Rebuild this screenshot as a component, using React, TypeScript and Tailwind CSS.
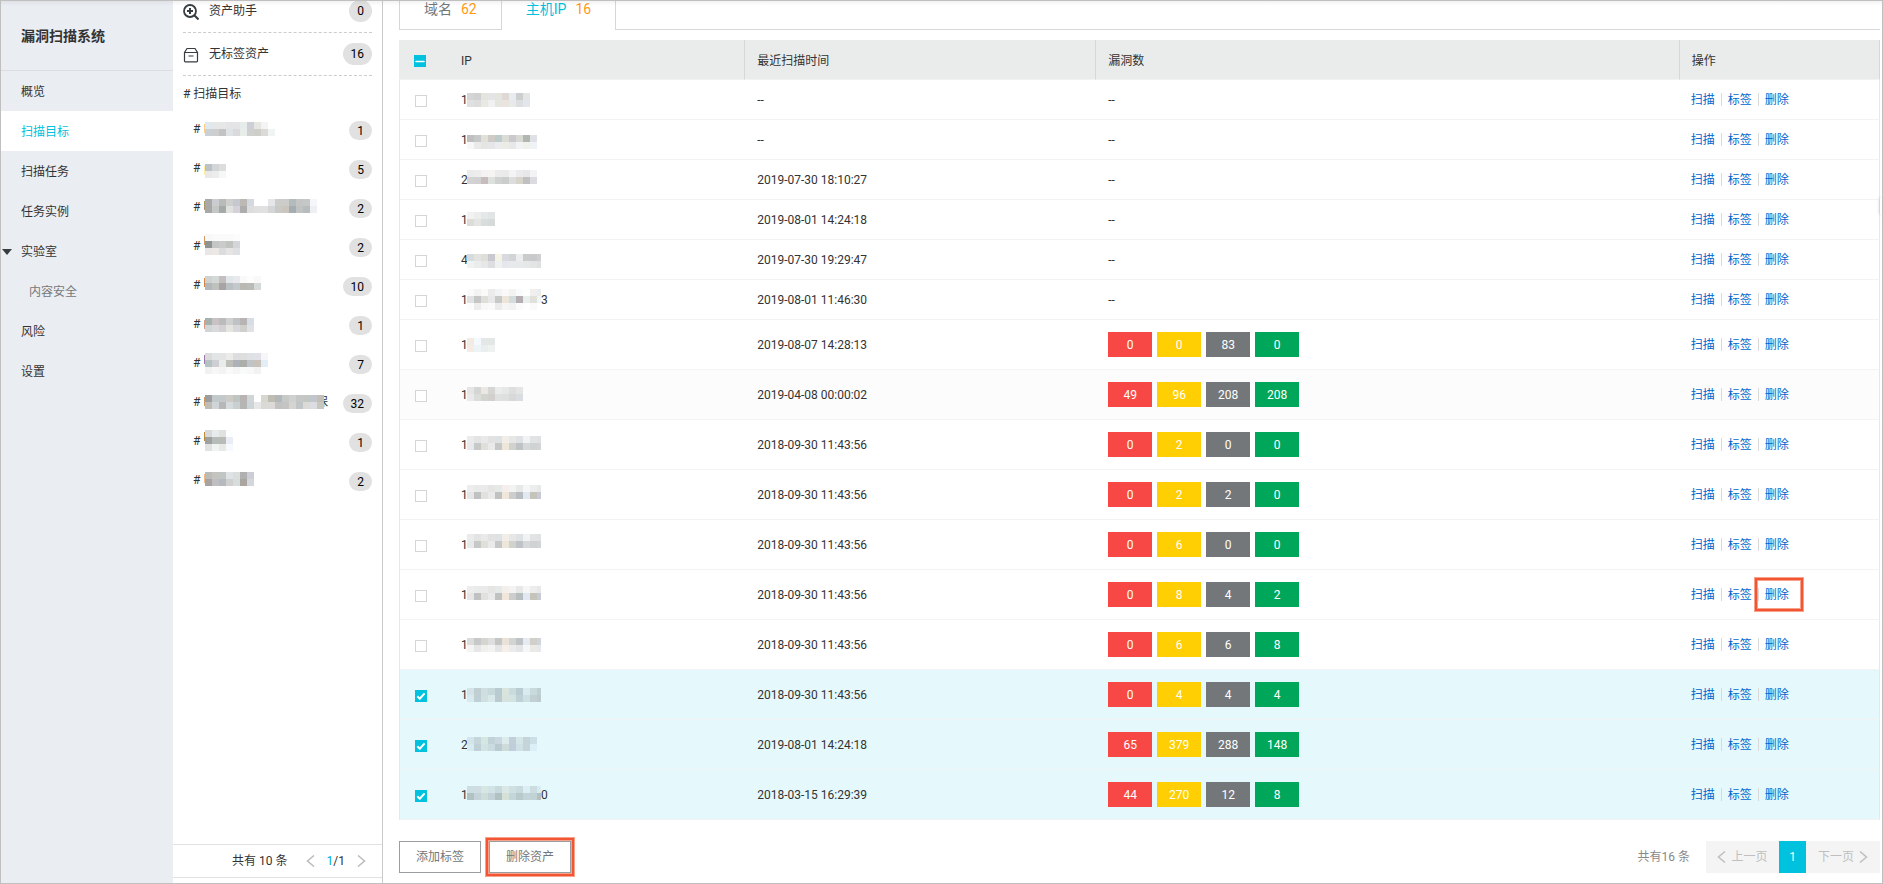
import { Fragment, useEffect, useRef } from "react";

type Grid = string[];

const CELL = 7;
const HOST_MASK = 74;

/* Pixelated mask; each row lists its cells as three- or six-digit hex colours, "-" is an empty cell. */
function Mosaic({ top, rows, height, sliver, max = 999 }: { top: number; rows: Grid; height: number; sliver?: string; max?: number }) {
  const grid = rows.map((r) => r.split(" "));
  const cols = Math.max(...grid.map((r) => r.length));
  return (
    <svg aria-hidden="true" width={Math.min(cols * CELL, max) + 1} height={height} shapeRendering="crispEdges" className="relative block shrink-0">
      {sliver && <rect x={0} y={top + 2} width={1} height={9} fill={sliver} />}
      {grid.map((row, y) =>
        row.map((c, x) =>
          c === "-" ? null : (
            <rect key={`${x}-${y}`} x={x * CELL + 1} y={top + y * CELL} width={CELL} height={CELL} fill={`#${c}`} />
          ),
        ),
      )}
    </svg>
  );
}

const nav = [
  { label: "概览" },
  { label: "扫描目标", active: true },
  { label: "扫描任务" },
  { label: "任务实例" },
  { label: "实验室", open: true },
  { label: "内容安全", child: true },
  { label: "风险" },
  { label: "设置" },
];

const tags: { count: number; top: number; rows: Grid; tail?: string; sliver: string }[] = [
  { count: 1, top: 11, sliver: "#fc8", rows: ["e1e9f0 e6e7e7 e6e7e7 e4e4e4 e3e4e5 e6ece9 cdced6 e6e6e2 f3f4f6", "c9d0d6 cdcecf c3c3c3 dfe3e7 dad9dc e7ede8 d0d0d0 cfcfca dbdad8 f0f4f2"] },
  { count: 5, top: 14, sliver: "#fe9", rows: ["bcc1c8 d2d6d6 dcdddc", "e9e9e9 ebecec f6f7f7"] },
  { count: 2, top: 10, sliver: "#a96", rows: ["a9a9a9 cacccf b9bbbb cfd0cd c5c8d0 bcb8b4 d3d9df - - e6e6e8 ccccc9 cccdca b4bbbd c4c6c5 c5c8c6 f5f6fb", "a8a8a8 c3c8c4 a5a9a8 dfe2df d5d1d8 adadae dcdddf e0e0e0 e1e1e1 d3d5d6 c9cac7 cac5bd a5adb1 bfc3c4 b6bdbc eeeff2"] },
  { count: 2, top: 6, sliver: "#c96", rows: ["f8f8f7 fafaf9 fafafa fafafa fcfcfc", "8e9492 c4c6c5 c9cac9 c1c3c1 d3d5d9", "eae6e4 ebe8e6 dcdcdf e7e5e4 dfe0e3"] },
  { count: 10, top: 9, sliver: "#c84", rows: ["d0d2d2 d4d8d6 c3bfbf e1e6e8 e7e9ec f9f9f9 fdfdfd f9f9f8", "b3b8ba bfc2bc a8a4a4 bbc0c5 c3c8cb b9b8b3 babab7 d5dad9"] },
  { count: 1, top: 12, sliver: "#d98", rows: ["a5b1ab c8c2c7 bbbbbb cfd0cf bfc2c5 b7b4b3 d7dde5", "d0d5d7 dad9dc d4d1d5 e4e5e1 d8d8da cfcfcb dfe1e7"] },
  { count: 7, top: 8, sliver: "#97a", rows: ["dadcdb e2e5e5 e4e4e5 ebecea dddde0 dddedd dfe2e4 e1e2e7 f5f6fa", "b4c2c1 cecfd4 eaecea bfbfb9 aeb1b8 aaafaa bfc4c9 c9c2b9 e2edf7", "f0f2f1 f7f7f6 f4f3f4 f8f9f9 f5f5f6 f9fafa f8f8f8 f3f2f2"] },
  { count: 32, top: 11, sliver: "#c96", tail: "保", rows: ["9e9ea0 c3c8ca c3c8cb cccbc6 bfc5c3 b7b4b2 d0d6d8 fff d5d7d0 bfbcb2 b2b7b9 c6c9c5 cfd0d0 c5c7c4 c2c7c4 c1c6cc c3bfb7", "bdbdb5 cfd4d7 b7b7b9 d6dcde cacfd0 b5b5b4 cdd5d9 e6e8e8 dad9d6 dcdad9 c2c2c3 c4c4c5 d5d4d1 c0c6c8 dcdad6 dcdde2 c8c7bd"] },
  { count: 1, top: 7, sliver: "#b84", rows: ["d8dad9 e8ebeb e1e1e0 fbfdfe", "9fa09f b6bcb9 b8bbb6 ebedf6", "dfe1e2 f1f3f2 e8e8e7 f6faff"] },
  { count: 2, top: 10, sliver: "#eb8", rows: ["bbbbb8 c3c3c0 c0c6c4 e0e3e5 dadfde b0b0b0 cbced6", "a6a3a2 bfbfc1 b6b9c0 d0d1ce d8dcdf aaa5a0 d3d6db"] },
];

const wide = ["ebebec e3e4e4 e8e9e9 e2e2e3 dfe2e3 f1ede9 e7e8e6 dfe2e4 f0f2f3 e2e4e3 dfe2e4", "e8e9ea c7c9c8 dfe0da e9eaea c6c7c7 eee6da d0d3cd c0c3c6 d6d9d9 d0d3d3 d3d4d6"];
const wide2 = ["ededed e9eaea eaeaea e5e5e4 e5e9e8 f4efec f3f3f3 e7e9e9 f5f6f6 ebeeed e6e8ea", "e5e6e6 c0c2c1 e1e2dd e9ebea c0c2c1 f0e6da cccdcc b8bdbf e2e8f2 c5c4ba c8cbd3"];
const blue = ["d3e3e7 bfcfd2 cfdfdf c8d9db b8cbd0 d9e4df cadbdd b9ccd1 d9ebf1 c8dadb c0cfd2", "d9eaef bed0d5 cfe0df d9e9eb bacacf d6e2db d2e3e2 bed1d5 cde0e3 c1d1d3 bdcbcd"];

type Host = { first: string; last?: string; time: string; counts?: number[]; top: number; rows: Grid; selected?: boolean; hover?: boolean; marked?: boolean };

const hosts: Host[] = [
  { first: "1", time: "--", top: 13, rows: ["d5d5d5 d0d1d0 e5e5e0 e5e5e6 e5e5e0 ded9d4 e8ecf1 cbcfcd e4e6e5", "dfe0e0 dcdddc e9e9e3 f1f1f1 e6e6e1 e9e5de e7e9ea dddedf e2e7ed"] },
  { first: "1", time: "--", top: 15, rows: ["bebfbf c7c9c8 e1e1da d0cbc6 bdcbcd dcdcd7 cac9cd d9d9d4 b1b6b2 dfe1e6", "f7f7f7 e9ebea e5e6e1 e5e6e9 eaeced ecece7 e6e8e9 f1f3f5 f1f1ec eff3f5"] },
  { first: "2", time: "2019-07-30 18:10:27", top: 10, rows: ["ebebec ededee f4f2f2 f5f4f3 ebebeb e9eaea f4f4f4 eaebec e6e8e8 f2f3f5", "d3d3d4 d1d1d2 c8bdbd dde2de cfd2d0 cacdcb dddddd d6d4cb c0c0c0 dbdce1"] },
  { first: "1", time: "2019-08-01 14:24:18", top: 12, rows: ["f2f2f1 ededed e4e8e9 e2e5e5", "dcddd7 e5e5e4 d8dddf d6dad9"] },
  { first: "4", time: "2019-07-30 19:29:47", top: 14, rows: ["d8dbdb e2e3e2 dddfd8 c7c8d0 f5f2e6 d8dae0 d3d4d5 ecedef cacbcb c9cacb cfcfcf", "eff2f2 ebedec e6e8e8 dcdedf eff1f0 e6e7ec e7e9eb e7eaea e6e8e7 e2e5e4 dfe0e0"] },
  { first: "1", last: "3", time: "2019-08-01 11:46:30", top: 9, rows: ["fafafa f3f3f2 fafaf8 ecebec f1f3f5 fbf9f7 f3f3f2 fafbfc fefefe f0efee e9edeb", "dfe1e3 c5c7c6 dedfd9 e7e8e8 c6c9c8 ede5da d3dbdd b4adb2 e8efee e0e1d9 f0f5f5", "fbfcfb ededed f8f8f7 fafafa ebebeb f5f5f4 f1f3f3 fbfbfb fefffd fbfafa"] },
  { first: "1", time: "2019-08-07 14:28:13", top: 18, counts: [0, 0, 83, 0], rows: ["f2ebe4 f3f9fc e3e8e6 e3e7e5", "f5ede5 edf4f8 eaeeed f0f2f1"] },
  { first: "1", time: "2019-04-08 00:00:02", top: 17, counts: [49, 96, 208, 208], hover: true, rows: ["e5e5e6 d5d5d4 ebe7e2 d5d5d4 eaebed e6e8e7 dddedd e4e6e6", "e9eaea dbdddb d3d4ce d1d0ce dfe0e0 dee0de d8d8d8 d9dde1"] },
  { first: "1", time: "2018-09-30 11:43:56", top: 16, counts: [0, 2, 0, 0], rows: wide },
  { first: "1", time: "2018-09-30 11:43:56", top: 15, counts: [0, 2, 2, 0], rows: wide2 },
  { first: "1", time: "2018-09-30 11:43:56", top: 14, counts: [0, 6, 0, 0], rows: wide },
  { first: "1", time: "2018-09-30 11:43:56", top: 16, counts: [0, 8, 4, 2], rows: wide2, marked: true },
  { first: "1", time: "2018-09-30 11:43:56", top: 18, counts: [0, 6, 6, 8], rows: ["dcdcdd c7c8c8 d5d6d0 dedede c4c6c5 eae2d8 d2d4d2 c0c3c5 e6ebf2 d0cfca d0d4dc", "f4f4f4 e6e6e6 f0f0ec f3f3f3 e5e5e5 f4f0e9 eaebea e3e5e6 f4f6f8 eaeae6 e6e8ec"] },
  { first: "1", time: "2018-09-30 11:43:56", top: 18, counts: [0, 4, 4, 4], selected: true, rows: blue },
  { first: "2", time: "2019-08-01 14:24:18", top: 17, counts: [65, 379, 288, 148], selected: true, rows: ["d3e5ea c6d7db d5e6e3 c2d3d8 c9d9df dcebec c2ced9 d5e6e8 c4d4d8 cddfe6", "d6eaf0 bfd0d6 d3e3e3 cbdce0 b9cad0 cddcd8 c0cedb d0e1e6 c4d4d8 dbeff8"] },
  { first: "1", last: "0", time: "2018-03-15 16:29:39", top: 16, counts: [44, 270, 12, 8], selected: true, rows: ["cddee2 cddde1 d5e6e3 d2e3e6 c9dade d9e7e5 cfe0e2 c8dade dbeef3 cbdde1 d8ebf0", "b1c2c5 c3d3d7 cddeda c2d2d6 b2c2c4 d5e1d7 c3d6da b8cacc c3d4d9 c2d3d6 b3c2c0"] },
];

const severityColors = ["bg-[#f74845]", "bg-[#ffce03]", "bg-[#73777a]", "bg-[#00a65a]"];

function Highlight({ place }: { place: string }) {
  return (
    <span
      aria-hidden="true"
      className={`pointer-events-none absolute border-2 border-[#f15533] shadow-[0_0_0_1px_#f8a28c,inset_0_0_0_1px_#f8a28c] ${place}`}
    />
  );
}

function Chevron({ dir, className }: { dir: "left" | "right"; className: string }) {
  return (
    <svg aria-hidden="true" width="9" height="12" viewBox="0 0 9 12" fill="none" stroke="currentColor" strokeWidth="1.5" className={className}>
      <path d={dir === "left" ? "M8 .5 1.5 6 8 11.5" : "M1 .5 7.500 6 1 11.500"} />
    </svg>
  );
}

function Tick({ label, checked, mixed }: { label: string; checked?: boolean; mixed?: boolean }) {
  const ref = useRef<HTMLInputElement>(null);
  useEffect(() => {
    if (ref.current) ref.current.indeterminate = !!mixed;
  }, [mixed]);
  return (
    <span className="relative ml-[15px] mt-[2px] block size-3">
      <input
        ref={ref}
        type="checkbox"
        aria-label={label}
        defaultChecked={checked}
        className="peer block size-3 appearance-none border border-[#d5d5d5] bg-white checked:border-[#00c1de] checked:bg-[#00c1de] indeterminate:border-[#00c1de] indeterminate:bg-[#00c1de]"
      />
      <svg aria-hidden="true" viewBox="0 0 12 12" fill="none" stroke="#fff" className="pointer-events-none absolute inset-0 hidden size-3 peer-checked:block">
        <path d="M2.300 6.300 4.800 8.700 9.600 3.300" strokeWidth="2" />
      </svg>
      <svg aria-hidden="true" viewBox="0 0 12 12" fill="none" stroke="#fff" className="pointer-events-none absolute inset-0 hidden size-3 peer-indeterminate:block">
        <path d="M2 6.500h8" strokeWidth="1.600" strokeLinecap="round" />
      </svg>
    </span>
  );
}

function Sidebar() {
  return (
    <aside className="w-[172px] shrink-0 bg-[#eaedf2]">
      <h1 className="flex h-[70px] items-center border-b border-[#dcdddf] pl-5 text-sm font-bold">漏洞扫描系统</h1>
      <nav>
        {nav.map((n) => (
          <a
            key={n.label}
            href="#"
            className={`relative flex h-10 items-center pt-[2px] ${n.child ? "pl-7 text-[#777]" : "pl-5"} ${n.active ? "bg-white text-[#00c1de]" : ""}`}
          >
            {n.open && (
              <svg aria-hidden="true" width="10" height="6" viewBox="0 0 10 6" className="absolute left-px">
                <path d="M0 0h10L5 6Z" fill="#373d41" />
              </svg>
            )}
            {n.label}
          </a>
        ))}
      </nav>
    </aside>
  );
}

const badge = "ml-auto flex min-w-[22px] items-center justify-center rounded-full bg-[#e1e1e1] px-2 text-black";

function TagPanel() {
  return (
    <section className="flex w-[210px] shrink-0 flex-col border-r border-[#c9c9c9]">
      <div className="flex-1 overflow-hidden px-[10px]">
        <div className="-mt-[11px]">
          <a href="#" className="flex h-[43px] items-center border-b border-dashed border-[#ccc]">
            <svg aria-hidden="true" width="16" height="16" viewBox="0 0 16 16" fill="none" stroke="#373d41" strokeWidth="2" className="mr-[10px] mt-[2px]">
              <circle cx="7" cy="7" r="6" strokeWidth="1.800" />
              <path d="M7 4v6M4 7h6" />
              <path d="m11.500 11.500 4 4" />
            </svg>
            资产助手
            <span className={`${badge} h-[22px]`}>0</span>
          </a>
          <a href="#" className="flex h-[43px] items-center border-b border-dashed border-[#ccc]">
            <svg aria-hidden="true" width="16" height="16" viewBox="0 0 16 16" fill="none" stroke="#373d41" className="mr-[10px] mt-[2px]">
              <path d="M1.500 5.500 4 1.500h8l2.500 4v8.500a.8.800 0 0 1-.8.800H2.300a.8.800 0 0 1-.8-.8ZM1.500 5.500h13M5.500 9h5" strokeWidth="1.200" />
            </svg>
            无标签资产
            <span className={`${badge} h-[22px]`}>16</span>
          </a>
          <h2 className="flex h-[35px] items-center"># 扫描目标</h2>
          <ul>
            {tags.map((t, i) => (
              <li key={i}>
                <a href="#" className="flex h-[39px] items-center pl-[10px]">
                  <span className="w-[11px] pb-1">#</span>
                  <Mosaic top={t.top} rows={t.rows} height={39} sliver={t.sliver} />
                  {t.tail && <span className="-ml-2 pb-1">{t.tail}</span>}
                  <span className={`${badge} h-[19px]`}>{t.count}</span>
                </a>
              </li>
            ))}
          </ul>
        </div>
      </div>
      <footer className="mb-[5px] flex h-[34px] items-center justify-end border-y border-[#e1e1e1] pr-4">
        <span>共有 10 条</span>
        <button type="button" aria-label="上一页" className="ml-[18px] text-[#bbb]">
          <Chevron dir="left" className="block" />
        </button>
        <span className="mx-3">
          <span className="text-[#00a8e0]">1</span>/1
        </span>
        <button type="button" aria-label="下一页" className="text-[#bbb]">
          <Chevron dir="right" className="block" />
        </button>
      </footer>
    </section>
  );
}

function Tabs() {
  const tab = "flex h-10 items-center gap-[9px] border-[#d5d7d8] px-6 pb-[2px]";
  return (
    <div className="overflow-hidden">
      <div role="tablist" className="-mt-[11px] flex text-sm">
        <button type="button" role="tab" aria-selected="false" className={`${tab} border text-[#73777a]`}>
          域名 <span className="text-[#ff9a14]">62</span>
        </button>
        <button type="button" role="tab" aria-selected="true" className={`${tab} border-r text-[#00c1de]`}>
          主机IP <span className="text-[#ff9a14]">16</span>
        </button>
        <span className="flex-1 border-b border-[#d5d7d8]" />
      </div>
    </div>
  );
}

const th = "h-10 border-r border-b border-r-[#d5d7d8] border-b-[#f2f2f2] px-3 pt-[2px] pb-0 text-left font-normal";

function HostTable() {
  return (
    <table className="mt-[10px] w-full table-fixed border-separate border-spacing-0">
      <colgroup>
        <col className="w-[50px]" />
        <col className="w-[20%]" />
        <col className="w-[23.7%]" />
        <col className="w-[39.4%]" />
        <col />
      </colgroup>
      <thead className="bg-[#eaeceb]">
        <tr>
          <th className="h-10 border-b border-[#f2f2f2] p-0">
            <Tick label="全选" mixed />
          </th>
          <th className={th}>IP</th>
          <th className={th}>最近扫描时间</th>
          <th className={th}>漏洞数</th>
          <th className={th}>操作</th>
        </tr>
      </thead>
      <tbody>
        {hosts.map((h, i) => {
          const height = h.counts ? "h-[50px]" : "h-10";
          const td = `${height} border-b border-[#f2f3f3] px-3 py-0`;
          return (
            <tr key={i} className={h.selected ? "bg-[#e5f9fd]" : h.hover ? "bg-[#fcfcfc]" : ""}>
              <td className={`${height} border-b border-l border-b-[#f2f3f3] border-l-[#e6e7eb] p-0`}>
                <Tick label={`选择第 ${i + 1} 行`} checked={h.selected} />
              </td>
              <td className={td}>
                <div className="flex items-center">
                  <span className="w-[5px]">{h.first}</span>
                  <Mosaic top={h.top} rows={h.rows} height={h.counts ? 49 : 39} max={HOST_MASK} />
                  {h.last && <span>{h.last}</span>}
                </div>
              </td>
              <td className={td}>{h.time}</td>
              <td className={td}>
                {h.counts ? (
                  <div className="flex gap-[5px] text-white">
                    {h.counts.map((c, k) => (
                      <span key={k} className={`flex h-[25px] w-11 items-center justify-center ${severityColors[k]}`}>
                        {c}
                      </span>
                    ))}
                  </div>
                ) : (
                  "--"
                )}
              </td>
              <td className={`${height} border-r border-b border-r-[#e6e7eb] border-b-[#f2f3f3] px-[11px] py-0`}>
                <div className="flex items-center gap-[6px] text-[#06c]">
                  {["扫描", "标签", "删除"].map((label, k) => (
                    <Fragment key={label}>
                      {k > 0 && <span className="h-[13px] w-px bg-[#d9d9d9]" />}
                      <a href="#" className="relative">
                        {label}
                        {h.marked && k === 2 && <Highlight place="-left-[10px] -right-[14px] -top-[9px] -bottom-[8px]" />}
                      </a>
                    </Fragment>
                  ))}
                </div>
              </td>
            </tr>
          );
        })}
      </tbody>
    </table>
  );
}

function TableFooter() {
  const action = "relative h-8 w-[82px] border border-[#9b9ea0] bg-white text-[#73777a]";
  return (
    <div className="mt-[21px] flex items-center">
      <div className="flex gap-2">
        <button type="button" className={action}>
          添加标签
        </button>
        <button type="button" className={action}>
          删除资产
          <Highlight place="-inset-x-[4px] -inset-y-[4px]" />
        </button>
      </div>
      <span className="ml-auto mr-4 text-[#888]">共有16 条</span>
      <div className="flex h-8 bg-[#f4f4f4] text-[#bfbfbf]">
        <button type="button" className="flex w-[73px] items-center justify-center gap-[5px]">
          <Chevron dir="left" className="shrink-0" />
          上一页
        </button>
        <button type="button" aria-current="page" className="w-[27px] bg-[#00c1de] text-white">
          1
        </button>
        <button type="button" className="flex w-[74px] items-center justify-center gap-[5px]">
          下一页
          <Chevron dir="right" className="shrink-0" />
        </button>
      </div>
    </div>
  );
}

export default function App() {
  return (
    <div className="relative flex min-h-screen border border-[#c0c0c0] bg-white font-[Roboto,'Noto_Sans_CJK_SC',sans-serif] text-xs text-[#333]">
      <Sidebar />
      <TagPanel />
      <main className="min-w-0 flex-1 pl-4 pr-[2px] pb-[10px]">
        <Tabs />
        <HostTable />
        <TableFooter />
      </main>
      <div className="pointer-events-none absolute inset-x-0 top-0 h-[5px] bg-linear-to-b from-black/5 to-transparent" />
      <div className="pointer-events-none absolute top-[196px] right-0 h-[18px] w-[2px] rounded-l-full bg-white shadow-[-1px_0_3px_rgba(0,0,0,0.15)]" />
    </div>
  );
}
